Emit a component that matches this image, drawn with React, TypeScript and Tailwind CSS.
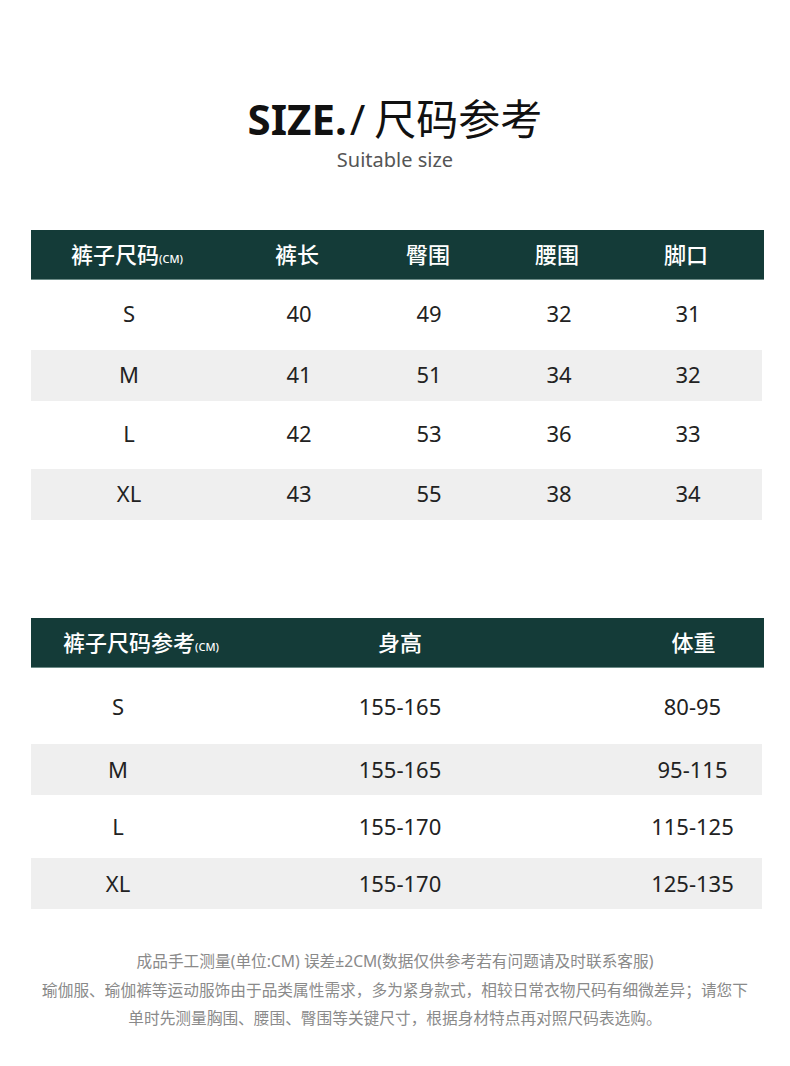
const font = { fontFamily: '"Noto Sans", "Noto Sans CJK SC", sans-serif' };

const sizeRows = [
  { size: "S", v: ["40", "49", "32", "31"], h: "h-[70px]", bg: "bg-white" },
  { size: "M", v: ["41", "51", "34", "32"], h: "h-[51px]", bg: "bg-[#efefef]" },
  { size: "L", v: ["42", "53", "36", "33"], h: "h-[68px]", bg: "bg-white" },
  { size: "XL", v: ["43", "55", "38", "34"], h: "h-[51px]", bg: "bg-[#efefef]" },
];

const refRows = [
  { size: "S", height: "155-165", weight: "80-95", h: "h-[76px]", bg: "bg-white" },
  { size: "M", height: "155-165", weight: "95-115", h: "h-[51px]", bg: "bg-[#efefef]" },
  { size: "L", height: "155-170", weight: "115-125", h: "h-[63px]", bg: "bg-white" },
  { size: "XL", height: "155-170", weight: "125-135", h: "h-[51px]", bg: "bg-[#efefef]" },
];

function Header({ children }: { children: React.ReactNode }) {
  return (
    <div className="ml-[31px] w-[733px] h-[50px] bg-[#143b38] border-b border-[#6d8c88] flex items-center text-white text-[22px] font-medium">
      {children}
    </div>
  );
}

export default function App() {
  return (
    <div className="w-[790px] h-[1066px] bg-white text-[#222]" style={font}>
      <div className="pt-[97px] text-center leading-[44px] text-[42px] text-[#111]">
        <span className="font-bold">SIZE.</span>
        <span className="ml-[3px]">/</span>
        <span className="ml-[9px]">尺码参考</span>
      </div>
      <div className="mt-[6px] text-center text-[20px] leading-[26px] text-[#555]">Suitable size</div>

      {/* 尺码表 */}
      <div className="mt-[57px]">
        <Header>
          <div className="w-[192px] text-center">
            裤子尺码<span className="text-[11px]">(CM)</span>
          </div>
          <div className="w-[148px] text-center">裤长</div>
          <div className="w-[114px] text-center">臀围</div>
          <div className="w-[144px] text-center">腰围</div>
          <div className="w-[114px] text-center">脚口</div>
        </Header>
        {sizeRows.map((r) => (
          <div key={r.size} className={`ml-[31px] w-[731px] flex items-center pb-[3px] text-[22px] ${r.h} ${r.bg}`}>
            <div className="w-[196px] text-center">{r.size}</div>
            <div className="w-[144px] text-center">{r.v[0]}</div>
            <div className="w-[116px] text-center">{r.v[1]}</div>
            <div className="w-[144px] text-center">{r.v[2]}</div>
            <div className="w-[114px] text-center">{r.v[3]}</div>
          </div>
        ))}
      </div>

      {/* 参考表 */}
      <div className="mt-[98px]">
        <Header>
          <div className="w-[220px] text-center">
            裤子尺码参考<span className="text-[11px]">(CM)</span>
          </div>
          <div className="w-[298px] text-center">身高</div>
          <div className="flex-1 pl-[74px] text-center">体重</div>
        </Header>
        {refRows.map((r) => (
          <div key={r.size} className={`ml-[31px] w-[731px] flex items-center text-[22px] ${r.h} ${r.bg}`}>
            <div className="w-[174px] text-center">{r.size}</div>
            <div className="w-[390px] text-center">{r.height}</div>
            <div className="flex-1 pl-[28px] text-center">{r.weight}</div>
          </div>
        ))}
      </div>

      <div className="mt-[38px] text-center text-[15.7px] leading-[28.5px] text-[#8a8a8a]">
        成品手工测量(单位:CM) 误差±2CM(数据仅供参考若有问题请及时联系客服)
        <br />
        瑜伽服、瑜伽裤等运动服饰由于品类属性需求，多为紧身款式，相较日常衣物尺码有细微差异；请您下
        <br />
        单时先测量胸围、腰围、臀围等关键尺寸，根据身材特点再对照尺码表选购。
      </div>
    </div>
  );
}
